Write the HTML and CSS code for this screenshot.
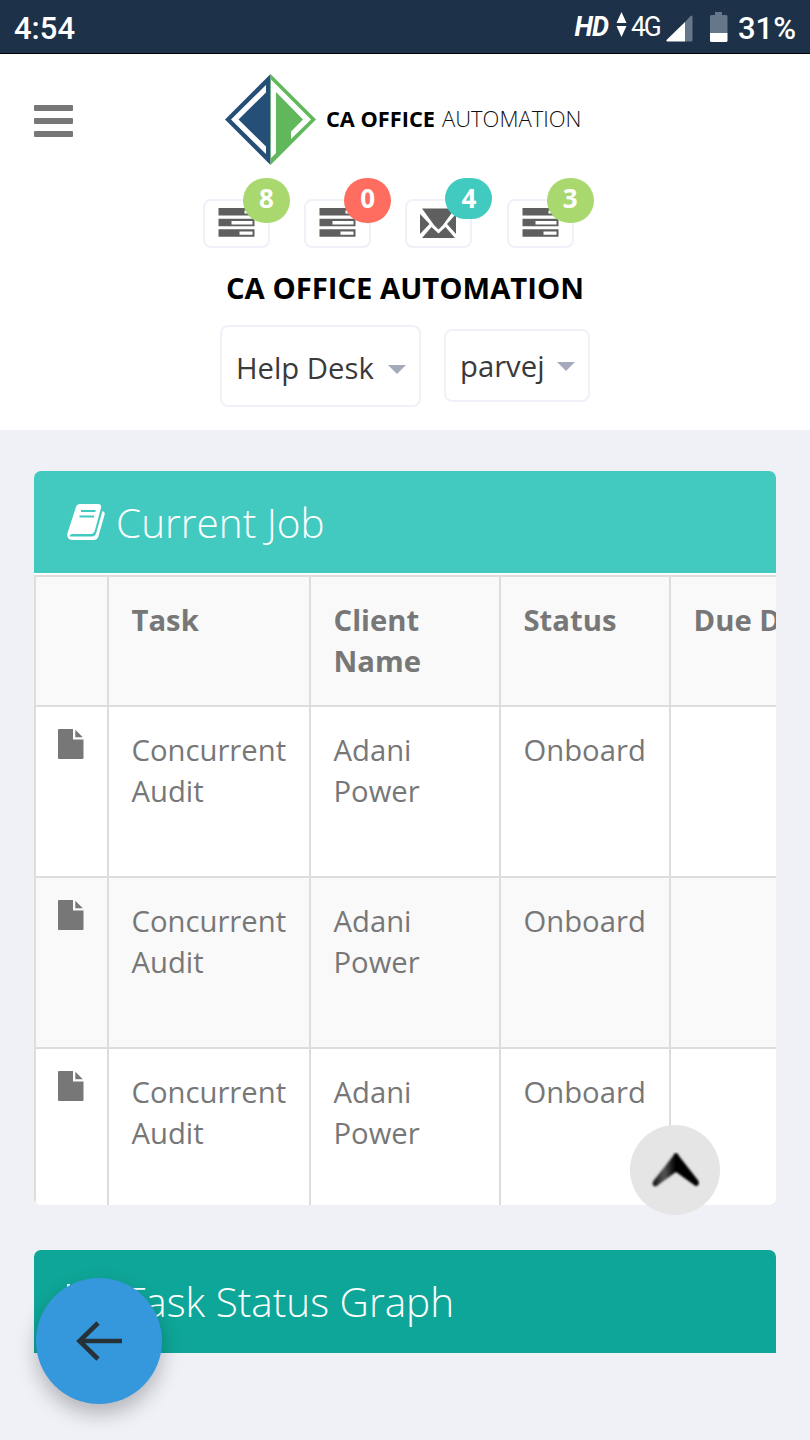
FILE: index.html
```html
<!DOCTYPE html>
<html lang="en">
<head>
    <meta charset="UTF-8">
    <meta name="viewport" content="width=device-width, initial-scale=1.0">
    <title>CA Office Automation</title>
    <link rel="stylesheet" href="styles.css">
</head>
<body>
    <div class="status-bar">
        <span class="clock">4:54</span>
        <span class="hd">HD</span>
        <svg class="arrows" width="11" height="26" viewBox="0 0 11 26"><path d="M5.500 0l5 11h-10zM5.500 25l5-11h-10z" fill="#fff"/></svg>
        <span class="network">4G</span>
        <svg class="signal" width="27" height="28" viewBox="0 0 27 28">
            <path d="M19 8l5.500-6q2-1.500 2 1v23q0 1.500-1.500 1.500H19z" fill="#66778a"/>
            <path d="M19 8v19.500H1.500Q-.5 27.500 1 25.500z" fill="#fff"/>
        </svg>
        <svg class="battery" width="18" height="30" viewBox="0 0 18 30">
            <path d="M5 0h7v3h4q1.500 0 1.500 1.500V21H0V4.500Q0 3 1.500 3H5z" fill="#66778a"/>
            <path d="M0 21h17.500v7.500q0 1.500-1.500 1.500H1.500Q0 30 0 28.500z" fill="#fff"/>
        </svg>
        <span class="percent">31%</span>
    </div>

    <header class="header">
        <div class="topbar">
            <div class="menu-toggle"><span></span><span></span><span></span></div>
            <svg class="logo" width="358" height="92" viewBox="0 0 358 92">
                <path d="M45.500 0v91L0 45.500z" fill="#254f77"/>
                <path d="M41 11v7.500L13.500 45.500 41 72.500V80L6 45.500z" fill="#fff"/>
                <path d="M45.500 0v91L91 45.500z" fill="#61b75c"/>
                <path d="M46 5.500l40 40-20 19.500v-7.500l12-12L51 18v61l-5 5z" fill="#fff"/>
                <text class="logo-bold" x="101" y="53" textLength="109" lengthAdjust="spacingAndGlyphs">CA OFFICE</text>
                <text class="logo-light" x="217" y="53" textLength="139.500" lengthAdjust="spacingAndGlyphs">AUTOMATION</text>
            </svg>
        </div>

        <svg class="defs" width="0" height="0">
            <symbol id="tasks" viewBox="0 0 36 29">
                <path d="M0 0h36v7.500H0zM0 10.700h36v7.500H0zM0 21.200h36v7.500H0z" fill="#5f5f5f"/>
                <path d="M26 2.500h8v3h-8zM13 13h21v3.500H13zM21 23.500h13v3.200H21z" fill="#fff"/>
            </symbol>
            <symbol id="file" viewBox="0 0 26 30">
                <path d="M1 0h14v10.500h10.500V29q0 1-1 1H1q-1 0-1-1V1q0-1 1-1z" fill="#777"/>
                <path d="M17.300.8l7.500 7.500h-7.500z" fill="#777"/>
            </symbol>
        </svg>

        <div class="notifications">
            <div class="notice"><svg width="37" height="29"><use href="#tasks"/></svg><span class="badge green">8</span></div>
            <div class="notice"><svg width="37" height="29"><use href="#tasks"/></svg><span class="badge red">0</span></div>
            <div class="notice mail">
                <svg width="37" height="31" viewBox="0 0 37 31">
                    <path d="M2 .5h33L23 17l-4.500 4.500L14 17zM0 6l9.500 10L0 26zM36 6v20l-9-10zM11.500 19l7 6.500 7-6.500L35 30H2z" fill="#5f5f5f"/>
                </svg>
                <span class="badge teal">4</span>
            </div>
            <div class="notice"><svg width="37" height="29"><use href="#tasks"/></svg><span class="badge green">3</span></div>
        </div>

        <h1>CA OFFICE AUTOMATION</h1>

        <div class="dropdowns">
            <div class="dropdown help">Help Desk <i class="caret"></i></div>
            <div class="dropdown user">parvej <i class="caret"></i></div>
        </div>
    </header>

    <main class="content">
        <section class="panel">
            <div class="panel-heading">
                <svg class="book" width="38" height="36" viewBox="0 0 38 36">
                    <path d="M13 0h18q4 0 3 4l-6 22q-1 4-4 4H6q-4 0-3 2.500h22q3 0 4-3L35.500 7q3 1 2 4l-6 21q-1 4-5 4H6Q-1 36 .5 29L9 3q1-3 4-3z" fill="#fff"/>
                    <path d="M14 7h14.500M12.500 12.500H27" stroke="#42cac0" stroke-width="2"/>
                </svg>
                <span>Current Job</span>
            </div>
            <div class="table-wrap">
                <table>
                    <colgroup>
                        <col class="col-icon"><col class="col-task"><col class="col-client"><col class="col-status"><col class="col-due">
                    </colgroup>
                    <thead>
                        <tr><th></th><th>Task</th><th>Client Name</th><th>Status</th><th>Due Date</th></tr>
                    </thead>
                    <tbody>
                        <tr><td><svg class="file" width="26" height="30"><use href="#file"/></svg></td><td>Concurrent Audit</td><td>Adani Power</td><td>Onboard</td><td></td></tr>
                        <tr><td><svg class="file" width="26" height="30"><use href="#file"/></svg></td><td>Concurrent Audit</td><td>Adani Power</td><td>Onboard</td><td></td></tr>
                        <tr><td><svg class="file" width="26" height="30"><use href="#file"/></svg></td><td>Concurrent Audit</td><td>Adani Power</td><td>Onboard</td><td></td></tr>
                    </tbody>
                </table>
            </div>
        </section>

        <section class="panel graph">
            <div class="panel-heading dark">
                <svg class="chart" width="46" height="36" viewBox="0 0 46 36"><path d="M0 0h3v33h43v3H0zM9 18h5v12H9zM18 10h5v20h-5z" fill="#fff"/></svg>
                <span>Task Status Graph</span>
            </div>
        </section>
    </main>

    <button class="scroll-top" aria-label="Scroll to top">
        <svg width="50" height="36" viewBox="0 0 50 36">
            <defs>
                <linearGradient id="shade" x1="0" y1="0" x2="1" y2="0">
                    <stop offset="0" stop-color="#111"/>
                    <stop offset=".25" stop-color="#555"/>
                    <stop offset=".5" stop-color="#000"/>
                </linearGradient>
                <filter id="soft"><feGaussianBlur stdDeviation=".8"/></filter>
            </defs>
            <path d="M26 1Q28 1 29 4L48.500 29q1.500 5-3 5L26 20 6 34.500q-4.500 0-3-5L23 4q1-3 3-3z" fill="url(#shade)" filter="url(#soft)"/>
        </svg>
    </button>
    <button class="back" aria-label="Back">
        <svg width="46" height="40" viewBox="0 0 46 40"><path d="M46 20H4M22 2L3.500 20 22 38" fill="none" stroke="#263238" stroke-width="4.600"/></svg>
    </button>
</body>
</html>
```
FILE: styles.css
```css
* {
    box-sizing: border-box;
}
body {
    margin: 0;
    height: 1440px;
    overflow: hidden;
    background: #f0f1f7;
    color: #777;
    font-family: "Open Sans", sans-serif;
    font-size: 29.25px;
}
.status-bar {
    display: flex;
    align-items: center;
    height: 54px;
    padding: 0 14px;
    background: #1d3149;
    border-bottom: 1px solid #000;
    color: #fff;
    font-family: Roboto, sans-serif;
    font-size: 31px;
    font-weight: 500;
}
.clock {
    margin-right: auto;
    padding-top: 3px;
}
.hd {
    font-size: 27px;
    font-style: italic;
    font-weight: 700;
    letter-spacing: -1px;
}
.arrows {
    margin: 0 3px 4px 8px;
}
.network {
    font-size: 28px;
    font-weight: 400;
    letter-spacing: -2px;
    transform: scaleX(0.94);
}
.signal {
    margin: 2px 0 0 5px;
}
.battery {
    margin: 0 10px 0 17px;
}
.percent {
    padding-top: 3px;
}
.header {
    height: 376px;
    padding-top: 20px;
    background: #fff;
}
.topbar {
    display: flex;
    padding-left: 34px;
}
.menu-toggle {
    display: flex;
    flex-direction: column;
    gap: 7px;
    width: 39px;
    margin-top: 31px;
}
.menu-toggle span {
    height: 6px;
    background: #777;
    border-radius: 1px;
}
.logo {
    margin-left: 152px;
}
.logo text {
    font-size: 22px;
    fill: #111;
}
.logo .logo-bold {
    font-weight: 700;
    fill: #000;
}
.logo .logo-light {
    font-weight: 300;
}
.defs {
    position: absolute;
}
.notifications {
    display: flex;
    gap: 34.200px;
    margin: 33px 0 0 203px;
}
.notice {
    position: relative;
    width: 67px;
    height: 49px;
    padding: 7px 0 0 15px;
    border: 2px solid #f0f0f8;
    border-radius: 8px;
    line-height: 0;
}
.notice > svg {
    margin-left: -2px;
}
.badge {
    position: absolute;
    top: -23px;
    left: 38px;
    width: 47px;
    height: 45px;
    border-radius: 24px;
    color: #fff;
    font-size: 26px;
    font-weight: 700;
    line-height: 41px;
    text-align: center;
}
.green {
    background: #a9d86e;
}
.red {
    background: #ff6c60;
}
.teal {
    height: 41px;
    background: #41cac0;
}
h1 {
    margin: 19px 0 0;
    color: #000;
    font-size: 29.25px;
    font-weight: 700;
    line-height: 42px;
    text-align: center;
}
.dropdowns {
    display: flex;
    align-items: center;
    gap: 23px;
    margin: 16px 0 0 220px;
}
.dropdown {
    display: flex;
    align-items: center;
    justify-content: space-between;
    padding: 0 13px 0 14px;
    border: 2px solid #f0f0f8;
    border-radius: 8px;
    color: #3a3a3a;
}
.help {
    width: 201px;
    height: 82px;
    padding-top: 4px;
}
.user {
    width: 146px;
    height: 73px;
    margin-top: -1px;
}
.caret {
    margin-top: 2px;
    border: 9px solid transparent;
    border-top-color: #a4aabb;
    border-bottom: 0;
}
.content {
    padding: 41px 34px 0;
}
.panel {
    height: 734px;
    margin-bottom: 45px;
    overflow: hidden;
    border-radius: 7px;
}
.graph {
    height: 103px;
    margin-bottom: 0;
    border-radius: 7px 7px 0 0;
}
.panel-heading {
    display: flex;
    align-items: center;
    gap: 11px;
    height: 102px;
    padding: 0 33px;
    background: #42cac0;
    color: #fff;
    font-size: 40.500px;
    font-weight: 300;
}
.panel-heading.dark {
    height: 103px;
    background: #0ea698;
}
.table-wrap {
    height: 632px;
    padding-top: 2px;
    overflow: hidden;
    background: #fff;
}
table {
    width: 856px;
    border-collapse: collapse;
    table-layout: fixed;
    line-height: 41.400px;
}
th, td {
    padding: 23px 22.500px 0;
    border: 2px solid #ddd;
    text-align: left;
    vertical-align: top;
}
th {
    height: 130px;
    font-weight: 700;
}
td {
    height: 171px;
}
thead tr, tbody tr:nth-child(even) {
    background: #f9f9f9;
}
.col-icon {
    width: 73px;
}
.col-task {
    width: 202px;
}
.col-client {
    width: 190px;
}
.col-status {
    width: 170px;
}
.file {
    display: block;
    margin: -1px 0 0 -0.500px;
}
.scroll-top, .back {
    position: fixed;
    display: flex;
    align-items: center;
    justify-content: center;
    padding: 0;
    border: 0;
    border-radius: 50%;
}
.scroll-top {
    top: 1125px;
    left: 630px;
    width: 90px;
    height: 90px;
    background: #e5e5e5;
}
.back {
    top: 1278px;
    left: 36px;
    width: 126px;
    height: 126px;
    background: #3598dc;
    box-shadow: 0 10px 20px rgba(0, 0, 0, 0.25);
}
```
